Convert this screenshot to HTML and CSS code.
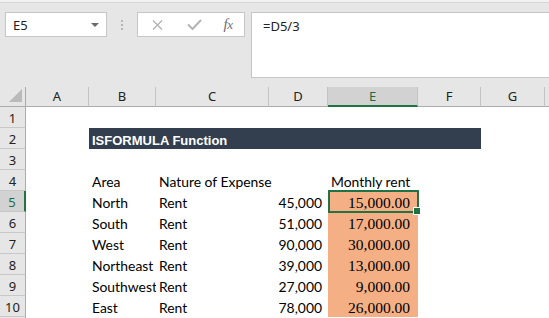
FILE: index.html
```html
<!DOCTYPE html>
<html>
<head>
<meta charset="utf-8">
<link rel="stylesheet" href="styles.css">
</head>
<body>
<div class="app">
  <div class="chrome">
    <div class="topbar">
      <div class="namebox"><span class="nb-text">E5</span><span class="caret"></span></div>
      <div class="sep"><i></i><i></i><i></i></div>
      <div class="fxbtns">
        <span class="slot s1"><svg width="11" height="10" viewBox="0 0 11 10"><path d="M1 0.5 L10 9.5 M10 0.5 L1 9.5" stroke="#b3b3b3" stroke-width="1.4" fill="none"/></svg></span>
        <span class="slot s2"><svg width="15" height="11" viewBox="0 0 15 11"><path d="M1 5.5 L5.5 10 L14 1" stroke="#b3b3b3" stroke-width="2" fill="none"/></svg></span>
        <span class="slot s3"><span class="fx">f<span class="fxx">x</span></span></span>
      </div>
      <div class="formula">=D5/3</div>
    </div>
  </div>
  <div class="sheet">
    <div class="hd corner"><svg width="13" height="13" viewBox="0 0 13 13"><polygon points="13,0 13,13 0,13" fill="#bababa"/></svg></div>
    <div class="hd col">A</div>
    <div class="hd col">B</div>
    <div class="hd col">C</div>
    <div class="hd col">D</div>
    <div class="hd col act">E</div>
    <div class="hd col">F</div>
    <div class="hd col">G</div>
    <div class="hd col edge"></div>

    <div class="rh">1</div><div class="c"></div><div class="c"></div><div class="c"></div><div class="c"></div><div class="c"></div><div class="c"></div><div class="c"></div><div class="c"></div>

    <div class="rh">2</div><div class="c"></div><div class="title">ISFORMULA Function</div><div class="c"></div><div class="c"></div>

    <div class="rh">3</div><div class="c"></div><div class="c"></div><div class="c"></div><div class="c"></div><div class="c"></div><div class="c"></div><div class="c"></div><div class="c"></div>

    <div class="rh">4</div><div class="c"></div><div class="c">Area</div><div class="c ov">Nature of Expense</div><div class="c"></div><div class="c">Monthly rent</div><div class="c"></div><div class="c"></div><div class="c"></div>

    <div class="rh act">5</div><div class="c"></div><div class="c">North</div><div class="c">Rent</div><div class="c num">45,000</div><div class="c val sel">15,000.00</div><div class="c"></div><div class="c"></div><div class="c"></div>

    <div class="rh">6</div><div class="c"></div><div class="c">South</div><div class="c">Rent</div><div class="c num">51,000</div><div class="c val">17,000.00</div><div class="c"></div><div class="c"></div><div class="c"></div>

    <div class="rh">7</div><div class="c"></div><div class="c">West</div><div class="c">Rent</div><div class="c num">90,000</div><div class="c val">30,000.00</div><div class="c"></div><div class="c"></div><div class="c"></div>

    <div class="rh">8</div><div class="c"></div><div class="c">Northeast</div><div class="c">Rent</div><div class="c num">39,000</div><div class="c val">13,000.00</div><div class="c"></div><div class="c"></div><div class="c"></div>

    <div class="rh">9</div><div class="c"></div><div class="c">Southwest</div><div class="c">Rent</div><div class="c num">27,000</div><div class="c val">9,000.00</div><div class="c"></div><div class="c"></div><div class="c"></div>

    <div class="rh">10</div><div class="c"></div><div class="c">East</div><div class="c">Rent</div><div class="c num">78,000</div><div class="c val">26,000.00</div><div class="c"></div><div class="c"></div><div class="c"></div>

    <div class="rh"></div><div class="c"></div><div class="c"></div><div class="c"></div><div class="c"></div><div class="c"></div><div class="c"></div><div class="c"></div><div class="c"></div>
  </div>
</div>
</body>
</html>
```

FILE: styles.css
```css
* { box-sizing: border-box; }
html, body { margin: 0; padding: 0; background: #ffffff; }
body { width: 549px; height: 318px; overflow: hidden; font-family: "Noto Sans", "Open Sans", sans-serif; }

.app { width: 549px; height: 318px; overflow: hidden; }

.chrome {
  height: 87px;
  background: #e6e6e6;
  border-top: 2px solid #f2f2f2;
}
.topbar {
  display: flex;
  align-items: flex-start;
  padding: 9px 0 0 5px;
  border-top: 1px solid #d6d6d6;
}

.namebox {
  width: 102px;
  height: 25px;
  background: #fff;
  border: 1px solid #c6c6c6;
  display: flex;
  align-items: center;
  justify-content: space-between;
  padding: 0 7px 0 7px;
}
.nb-text { font-size: 13px; color: #222; line-height: 18px; padding-top: 1px; }
.caret {
  width: 0; height: 0;
  border-left: 4px solid transparent;
  border-right: 4px solid transparent;
  border-top: 4px solid #6a6a6a;
  margin-top: 1px;
}

.sep {
  margin-left: 14px;
  width: 2px;
  display: flex;
  flex-direction: column;
  gap: 2px;
  padding-top: 8px;
}
.sep i { display: block; width: 2px; height: 2px; background: #b5b5b5; }

.fxbtns {
  margin-left: 14px;
  width: 108px;
  height: 25px;
  background: #fff;
  border: 1px solid #c6c6c6;
  display: flex;
  align-items: center;
}
.slot { display: flex; justify-content: center; align-items: center; height: 23px; }
.s1 { width: 38px; }
.s2 { width: 36px; }
.s3 { width: 32px; }
.fx {
  font-family: "Liberation Serif", "DejaVu Serif", serif;
  font-style: italic;
  font-size: 15px;
  color: #6e6e6e;
  line-height: 15px;
  letter-spacing: -0.5px;
}
.fxx { font-size: 13px; }

.formula {
  margin-left: 6px;
  flex: 1;
  height: 66px;
  background: #fff;
  border: 1px solid #c6c6c6;
  border-right: none;
  font-size: 13px;
  color: #222;
  line-height: 18px;
  padding: 4px 0 0 11px;
}

.sheet {
  display: grid;
  grid-template-columns: 26px 63px 67px 113px 59px 90px 63px 64px 4px;
  grid-template-rows: 20px repeat(11, 21px);
}

.hd {
  background: #e6e6e6;
  border-bottom: 1px solid #ababab;
  font-size: 13px;
  color: #222;
  line-height: 19px;
  text-align: center;
}
.col { border-right: 1px solid #c4c4c4; }
.col.edge { border-right: none; }
.corner {
  border-right: 1px solid #ababab;
  display: flex;
  justify-content: flex-end;
  align-items: flex-end;
  padding: 0 3px 4px 0;
}
.corner svg { display: block; }
.col.act {
  background: #d2d2d2;
  color: #1e6b40;
  border-bottom: 2px solid #217346;
}

.rh {
  background: #e6e6e6;
  border-right: 1px solid #ababab;
  border-bottom: 1px solid #c8c8c8;
  font-size: 13px;
  color: #222;
  text-align: center;
  line-height: 18px;
  padding-top: 2px;
}
.rh.act {
  background: #d2d2d2;
  color: #1e6b40;
  border-right: 2px solid #217346;
}

.c {
  font-family: "Lato", "Open Sans", sans-serif;
  font-size: 13.9px;
  color: #000;
  white-space: nowrap;
  overflow: hidden;
  padding: 3px 3px 0 3px;
  line-height: 18px;
}
.c.ov { overflow: visible; position: relative; z-index: 1; }
.num { text-align: right; padding-right: 6px; }
.val {
  background: #f4b084;
  text-align: right;
  padding: 3px 8px 0 3px;
  line-height: 18px;
  font-family: "Liberation Serif", "DejaVu Serif", serif;
  font-size: 15.5px;
}
.sel { position: relative; overflow: visible; z-index: 2; }
.sel::before {
  content: "";
  position: absolute;
  top: -1px; left: 0; right: -1px; bottom: -1px;
  border: 2px solid #217346;
}
.sel::after {
  content: "";
  position: absolute;
  right: -3px; bottom: -3px;
  width: 6px; height: 6px;
  background: #217346;
  border: 1px solid #fff;
}

.title {
  grid-column: 3 / 8;
  background: #333f4f;
  color: #fff;
  font-family: "Liberation Sans", Arial, sans-serif;
  font-weight: bold;
  font-size: 13px;
  line-height: 17px;
  padding: 4px 3px 0 3px;
  white-space: nowrap;
  overflow: hidden;
}
```
